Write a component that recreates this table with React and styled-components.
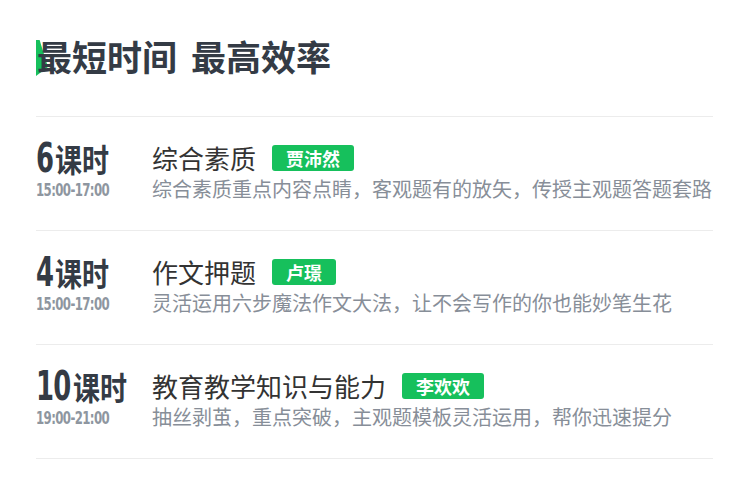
import React from "react";
import styled, { createGlobalStyle } from "styled-components";

const Global = createGlobalStyle`
  html, body { margin: 0; padding: 0; background: #fff; }
  body { font-family: "Noto Sans CJK SC", "Noto Sans", sans-serif; }
`;

const Page = styled.div`
  padding: 0 37px 0 36px;
  width: 750px;
  box-sizing: border-box;
`;

const Header = styled.h1`
  position: relative;
  margin: 0;
  padding: 38px 0 42px;
  font-size: 35px;
  line-height: 36px;
  font-weight: 700;
  color: #343b45;
  word-spacing: 6px;
  border-bottom: 1px solid #ececec;
  &::before {
    content: "";
    position: absolute;
    left: 0;
    top: 40px;
    width: 12px;
    height: 36px;
    background: #16c05c;
    clip-path: polygon(0 0, 30% 0, 100% 75%, 0 100%);
  }
`;

const HeaderText = styled.span`
  position: relative;
  margin-left: 1px;
`;

const Row = styled.div`
  display: flex;
  padding: 26px 0 0;
  height: 114px;
  box-sizing: border-box;
  border-bottom: 1px solid #ececec;
`;

const Left = styled.div`
  width: 116px;
  flex: none;
`;

const Hours = styled.div`
  height: 30px;
  line-height: 30px;
  color: #343b45;
  font-weight: 700;
  white-space: nowrap;
  display: flex;
  align-items: baseline;
`;

const NumBox = styled.span`
  display: inline-block;
  width: ${(p) => p.$digits * 18 + 1}px;
  white-space: nowrap;
`;

const Num = styled.span`
  display: inline-block;
  font-family: "DejaVu Sans Condensed", "DejaVu Sans", sans-serif;
  font-size: 40px;
  font-weight: 700;
  letter-spacing: -1px;
  transform: scaleX(0.72);
  transform-origin: left center;
`;

const Unit = styled.span`
  display: inline-block;
  font-family: "Noto Sans CJK SC", sans-serif;
  font-size: 32px;
  font-weight: 700;
  transform: scaleX(0.845);
  transform-origin: left center;
`;

const Time = styled.div`
  margin-top: 8px;
  height: 18px;
  line-height: 18px;
  font-family: "DejaVu Sans Condensed", "DejaVu Sans", sans-serif;
  font-size: 17px;
  font-weight: 700;
  letter-spacing: -0.8px;
  color: #8e96a0;
  white-space: nowrap;
  transform: scaleX(0.77);
  transform-origin: left center;
`;

const Right = styled.div`
  flex: 1;
  min-width: 0;
`;

const TitleLine = styled.div`
  display: flex;
  align-items: center;
  height: 30px;
`;

const Title = styled.span`
  font-size: 26px;
  line-height: 30px;
  color: #333;
  font-weight: 400;
`;

const Tag = styled.span`
  margin-left: 16px;
  height: 26px;
  padding: 0 14px;
  border-radius: 3px;
  background: #16c05c;
  color: #fff;
  font-size: 18px;
  font-weight: 700;
  line-height: 26px;
`;

const Desc = styled.div`
  margin-top: 4px;
  font-size: 20px;
  line-height: 24px;
  color: #878e98;
  white-space: nowrap;
`;

const courses = [
  {
    num: "6",
    time: "15:00-17:00",
    title: "综合素质",
    teacher: "贾沛然",
    desc: "综合素质重点内容点睛，客观题有的放矢，传授主观题答题套路",
  },
  {
    num: "4",
    time: "15:00-17:00",
    title: "作文押题",
    teacher: "卢璟",
    desc: "灵活运用六步魔法作文大法，让不会写作的你也能妙笔生花",
  },
  {
    num: "10",
    time: "19:00-21:00",
    title: "教育教学知识与能力",
    teacher: "李欢欢",
    desc: "抽丝剥茧，重点突破，主观题模板灵活运用，帮你迅速提分",
  },
];

export default function App() {
  return (
    <Page>
      <Global />
      <Header>
        <HeaderText>最短时间 最高效率</HeaderText>
      </Header>
      {courses.map((c) => (
        <Row key={c.title}>
          <Left>
            <Hours>
              <NumBox $digits={c.num.length}>
                <Num>{c.num}</Num>
              </NumBox>
              <Unit>课时</Unit>
            </Hours>
            <Time>{c.time}</Time>
          </Left>
          <Right>
            <TitleLine>
              <Title>{c.title}</Title>
              <Tag>{c.teacher}</Tag>
            </TitleLine>
            <Desc>{c.desc}</Desc>
          </Right>
        </Row>
      ))}
    </Page>
  );
}
